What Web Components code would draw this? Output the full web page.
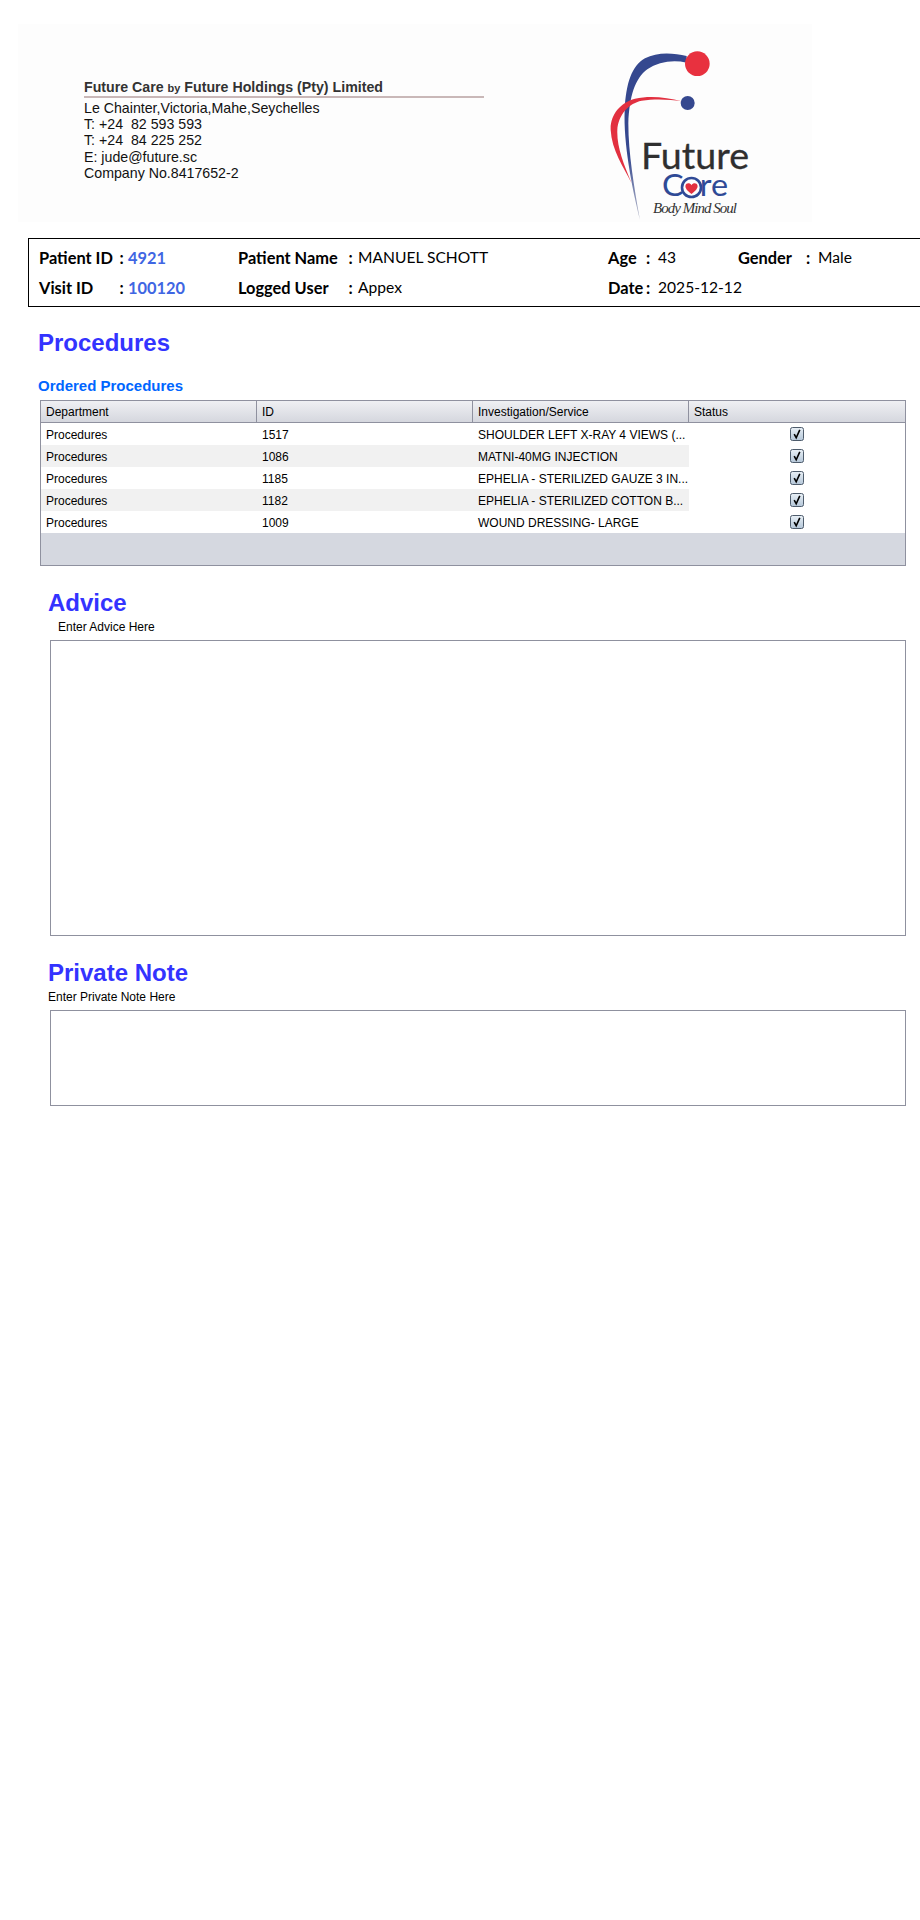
<!DOCTYPE html>
<html>
<head>
<meta charset="utf-8">
<title>Future Care - Procedures</title>
<style>
    html, body { margin: 0; padding: 0; background: #fff; }
    body { font-family: "Liberation Sans", Arial, sans-serif; color: #000; min-height: 1920px; }
</style>
</head>
<body>
<letter-head></letter-head>
<patient-banner></patient-banner>

<section-heading indent="38" top="22">Procedures</section-heading>
<sub-heading>Ordered Procedures</sub-heading>
<proc-table>
    <proc-row dept="Procedures" code="1517" service="SHOULDER LEFT X-RAY 4 VIEWS (..."></proc-row>
    <proc-row alt dept="Procedures" code="1086" service="MATNI-40MG INJECTION"></proc-row>
    <proc-row dept="Procedures" code="1185" service="EPHELIA - STERILIZED GAUZE 3 IN..."></proc-row>
    <proc-row alt dept="Procedures" code="1182" service="EPHELIA - STERILIZED COTTON B..."></proc-row>
    <proc-row dept="Procedures" code="1009" service="WOUND DRESSING- LARGE"></proc-row>
</proc-table>

<section-heading indent="48" top="23">Advice</section-heading>
<note-box label="Enter Advice Here" indent="58" height="296"></note-box>

<section-heading indent="48" top="23">Private Note</section-heading>
<note-box label="Enter Private Note Here" indent="48" height="96"></note-box>

<script>
const letterTemplate = document.createElement('template');
letterTemplate.innerHTML = /*html*/ `
    <style>
        :host {
            display: flex;
            box-sizing: border-box;
            margin: 24px 0 0 18px;
            width: 794px;
            height: 198px;
            padding-left: 66px;
            background: #fdfdfd;
        }
        .address {
            width: 526px;
            padding-top: 55px;
            font-size: 14.2px;
            line-height: 16.2px;
            color: #111;
        }
        .company {
            font-weight: bold;
            font-size: 14.2px;
            line-height: 17px;
            color: #333;
            width: 400px;
            height: 17px;
            border-bottom: 2px solid #c9b8b8;
            margin-bottom: 2px;
        }
        .company small { font-size: 11px; }
        svg { display: block; margin-top: 26px; flex: none; }
    </style>
    <div class="address">
        <div class="company">Future Care <small>by</small> Future Holdings (Pty) Limited</div>
        <div>Le Chainter,Victoria,Mahe,Seychelles</div>
        <div>T: +24&nbsp; 82 593 593</div>
        <div>T: +24&nbsp; 84 225 252</div>
        <div>E: jude@future.sc</div>
        <div>Company No.8417652-2</div>
    </div>
    <svg width="150" height="170" viewBox="50 30 150 170">
        <defs>
            <linearGradient id="tail" x1="0" y1="0" x2="0" y2="1">
                <stop offset="0" stop-color="#35488f"/>
                <stop offset="0.62" stop-color="#35488f"/>
                <stop offset="1" stop-color="#b9bccb"/>
            </linearGradient>
        </defs>
        <g transform="scale(0.33333)">
            <path fill="url(#tail)" d="M380,108 C340,98 290,95 255,115 C215,138 198,190 194,270 C190,370 215,500 240,600 C222,500 205,400 205,310 C208,230 225,175 262,148 C295,125 340,118 380,128 Z"/>
            <circle cx="412" cy="131" r="37" fill="#e8313f"/>
            <path fill="#e23040" d="M365,244 C320,232 270,226 225,236 C180,248 150,285 152,330 C155,390 190,440 215,490 C190,430 170,380 172,330 C175,285 205,250 245,242 C285,236 330,238 365,244 Z"/>
            <circle cx="383" cy="249" r="21" fill="#35488f"/>
        </g>
        <text x="81" y="148.5" font-family="Lato, sans-serif" font-size="37" fill="#2f2f2f" stroke="#2f2f2f" stroke-width="0.3" textLength="108" lengthAdjust="spacingAndGlyphs">Future</text>
        <text x="102" y="175.5" font-family="Lato, sans-serif" font-size="31" fill="#2f4a96" textLength="66" lengthAdjust="spacingAndGlyphs">Care</text>
        <circle cx="131.5" cy="167.5" r="9.5" fill="#fdfdfd" stroke="#2f4a96" stroke-width="2.6"/>
        <path fill="#e23040" d="M131.5,174 C127,170.5 125,168 125.5,165.5 C126,162.8 130,162.5 131.5,165.3 C133,162.5 137,162.8 137.5,165.5 C138,168 136,170.5 131.5,174 Z"/>
        <text x="93" y="192.5" font-family="'Liberation Serif', serif" font-style="italic" font-size="15" fill="#333" textLength="84" lengthAdjust="spacing">Body Mind Soul</text>
    </svg>
`;

class LetterHead extends HTMLElement {
    constructor() {
        super();
        this.attachShadow({mode: "open"});
        this.shadowRoot.appendChild(letterTemplate.content.cloneNode(true));
    }
}

const bannerTemplate = document.createElement('template');
bannerTemplate.innerHTML = /*html*/ `
    <style>
        :host {
            display: grid;
            box-sizing: border-box;
            grid-template-columns: 80.5px 8.5px 110px 110.5px 9.5px 250px 38px 12px 80px 68px 12px auto;
            grid-auto-rows: 30px;
            align-items: center;
            margin: 16px 0 0 28px;
            width: 892px;
            height: 69px;
            padding: 3px 0 0 10px;
            border: 1px solid #000;
            border-right: 0;
            font-family: Lato, "Open Sans", sans-serif;
            font-size: 15.6px;
            color: #000;
        }
        b { font-weight: bold; font-size: 16.4px; white-space: nowrap; }
        span { white-space: nowrap; }
        .id { color: #3f66e3; font-weight: bold; font-size: 16.4px; }
        .blank { grid-column: span 3; }
    </style>
    <b>Patient ID</b><b>:</b><span class="id">4921</span>
    <b>Patient Name</b><b>:</b><span>MANUEL SCHOTT</span>
    <b>Age</b><b>:</b><span>43</span>
    <b>Gender</b><b>:</b><span>Male</span>
    <b>Visit ID</b><b>:</b><span class="id">100120</span>
    <b>Logged User</b><b>:</b><span>Appex</span>
    <b>Date</b><b>:</b><span>2025-12-12</span>
    <span class="blank"></span>
`;

class PatientBanner extends HTMLElement {
    constructor() {
        super();
        this.attachShadow({mode: "open"});
        this.shadowRoot.appendChild(bannerTemplate.content.cloneNode(true));
    }
}

class SectionHeading extends HTMLElement {
    constructor() {
        super();
        this.attachShadow({mode: "open"});
        this.shadowRoot.innerHTML = /*html*/ `
            <style>
                :host {
                    display: block;
                    margin: ${this.getAttribute('top')}px 0 0 ${this.getAttribute('indent')}px;
                    font: bold 24px/28px "Liberation Sans", Arial, sans-serif;
                    color: #3333ff;
                }
            </style>
            <slot></slot>
        `;
    }
}

class SubHeading extends HTMLElement {
    constructor() {
        super();
        this.attachShadow({mode: "open"});
        this.shadowRoot.innerHTML = /*html*/ `
            <style>
                :host {
                    display: block;
                    margin: 21px 0 6px 38px;
                    font: bold 15px/16px "Liberation Sans", Arial, sans-serif;
                    color: #0066ff;
                }
            </style>
            <slot></slot>
        `;
    }
}

const tableTemplate = document.createElement('template');
tableTemplate.innerHTML = /*html*/ `
    <style>
        :host {
            display: block;
            box-sizing: border-box;
            margin-left: 40px;
            width: 866px;
            height: 166px;
            border: 1px solid #8f919f;
            background: #d5d8e0;
            font: 12px/14px "Liberation Sans", Arial, sans-serif;
            color: #000;
        }
        .head {
            display: grid;
            grid-template-columns: repeat(4, 216px);
            height: 22px;
            box-sizing: border-box;
            border-bottom: 1px solid #8f919f;
            background: linear-gradient(#eff0f3, #d5d7de);
        }
        .head div {
            box-sizing: border-box;
            padding: 4px 0 0 5px;
            border-right: 1px solid #8f919f;
        }
        .head div:last-child { border-right: 0; }
    </style>
    <div class="head">
        <div>Department</div><div>ID</div><div>Investigation/Service</div><div>Status</div>
    </div>
    <slot></slot>
`;

class ProcTable extends HTMLElement {
    constructor() {
        super();
        this.attachShadow({mode: "open"});
        this.shadowRoot.appendChild(tableTemplate.content.cloneNode(true));
    }
}

class ProcRow extends HTMLElement {
    constructor() {
        super();
        this.attachShadow({mode: "open"});
        const stripe = this.hasAttribute('alt') ? '#f1f1f1' : '#fff';
        this.shadowRoot.innerHTML = /*html*/ `
            <style>
                :host {
                    display: grid;
                    grid-template-columns: repeat(4, 216px);
                    height: 22px;
                    align-items: center;
                }
                .cell {
                    height: 22px;
                    box-sizing: border-box;
                    padding: 5px 0 0 5px;
                    background: ${stripe};
                    white-space: nowrap;
                }
                .check {
                    height: 22px;
                    background: #fff;
                    display: flex;
                    align-items: center;
                    justify-content: center;
                }
                svg { display: block; }
            </style>
            <div class="cell">${this.getAttribute('dept')}</div>
            <div class="cell">${this.getAttribute('code')}</div>
            <div class="cell">${this.getAttribute('service')}</div>
            <div class="check">
                <svg width="14" height="14" viewBox="0 0 14 14">
                    <defs>
                        <linearGradient id="box" x1="0" y1="0" x2="0" y2="1">
                            <stop offset="0" stop-color="#e9f0f6"/>
                            <stop offset="1" stop-color="#b4c6d8"/>
                        </linearGradient>
                    </defs>
                    <rect x="0.5" y="0.5" width="13" height="13" rx="2" fill="url(#box)" stroke="#4e5c6c"/>
                    <path d="M4.2 7.2 L6.2 10.8 L9.8 2.8" fill="none" stroke="#000" stroke-width="1.6"/>
                </svg>
            </div>
        `;
    }
}

class NoteBox extends HTMLElement {
    constructor() {
        super();
        this.attachShadow({mode: "open"});
        this.shadowRoot.innerHTML = /*html*/ `
            <style>
                :host {
                    display: block;
                    font: 12px/14px "Liberation Sans", Arial, sans-serif;
                    color: #000;
                }
                label {
                    display: block;
                    margin: 3px 0 6px ${this.getAttribute('indent')}px;
                }
                textarea {
                    display: block;
                    box-sizing: border-box;
                    margin-left: 50px;
                    width: 856px;
                    height: ${this.getAttribute('height')}px;
                    border: 1px solid #8f919f;
                    border-radius: 0;
                    padding: 0;
                    resize: none;
                    outline: none;
                    background: #fff;
                }
            </style>
            <label>${this.getAttribute('label')}</label>
            <textarea></textarea>
        `;
    }
}

customElements.define('letter-head', LetterHead);
customElements.define('patient-banner', PatientBanner);
customElements.define('section-heading', SectionHeading);
customElements.define('sub-heading', SubHeading);
customElements.define('proc-table', ProcTable);
customElements.define('proc-row', ProcRow);
customElements.define('note-box', NoteBox);
</script>
</body>
</html>
